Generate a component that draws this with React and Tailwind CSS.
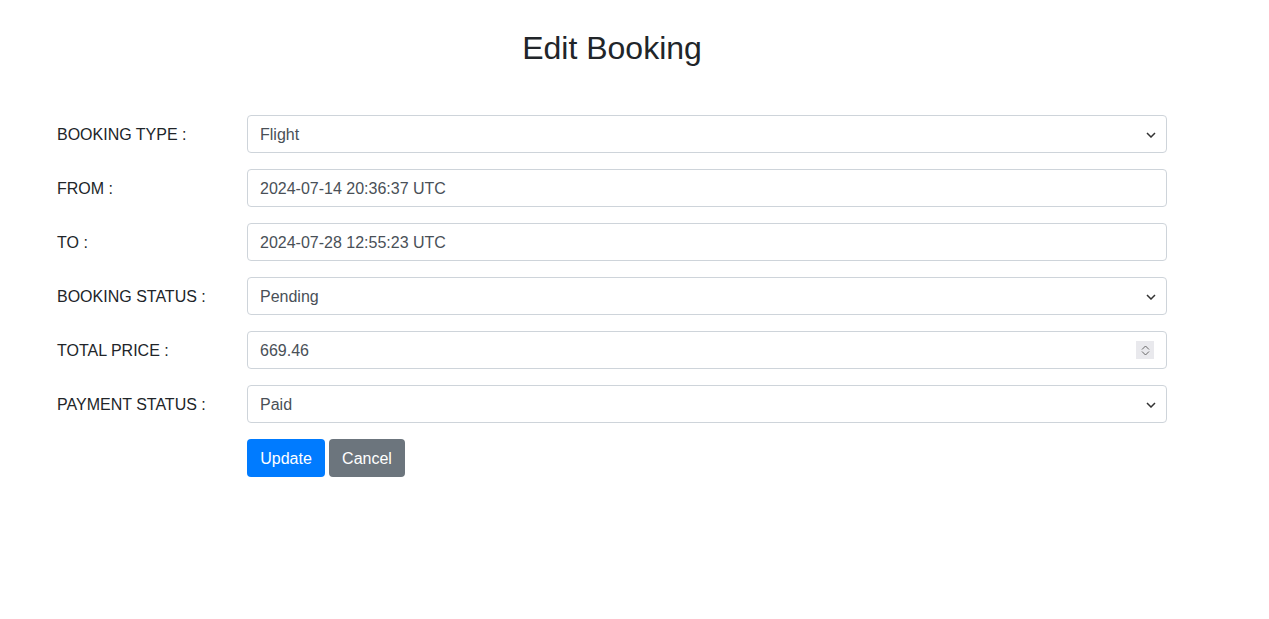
import React from "react";

const font = { fontFamily: '"Liberation Sans", Arial, sans-serif' };

function Chevron() {
  return (
    <svg width="10" height="6" viewBox="0 0 10 6" className="absolute right-[10px] top-[16px]">
      <path d="M1 1 L5 5 L9 1" fill="none" stroke="#333" strokeWidth="1.5" />
    </svg>
  );
}

function Field({ value, kind }) {
  return (
    <div className="relative h-[38px] w-[920px] rounded-[4px] border border-[#ced4da] bg-white pl-[12px] pt-[2px] flex items-center text-[16px] text-[#495057]">
      <span>{value}</span>
      {kind === "select" && <Chevron />}
      {kind === "number" && (
        <div className="absolute right-[12px] top-[9px] w-[18px] h-[18px] bg-[#e9e9ed] flex flex-col items-center justify-center gap-[1px]">
          <svg width="9" height="5" viewBox="0 0 9 5"><path d="M1 4.5 L4.5 1 L8 4.5" fill="none" stroke="#666" strokeWidth="1" /></svg>
          <svg width="9" height="5" viewBox="0 0 9 5"><path d="M1 0.5 L4.5 4 L8 0.5" fill="none" stroke="#666" strokeWidth="1" /></svg>
        </div>
      )}
    </div>
  );
}

const rows = [
  ["BOOKING TYPE :", "Flight", "select"],
  ["FROM :", "2024-07-14 20:36:37 UTC", "text"],
  ["TO :", "2024-07-28 12:55:23 UTC", "text"],
  ["BOOKING STATUS :", "Pending", "select"],
  ["TOTAL PRICE :", "669.46", "number"],
  ["PAYMENT STATUS :", "Paid", "select"],
];

export default function App() {
  return (
    <div className="min-h-[619px] bg-white text-[#212529]" style={font}>
      <div className="ml-[57px] w-[1110px] pt-[29px]">
        <h2 className="text-center text-[32px] leading-[38px] font-normal mb-[48px]">Edit Booking</h2>
        <div className="flex flex-col gap-[16px]">
          {rows.map(([label, value, kind]) => (
            <div key={label} className="flex items-center">
              <div className="w-[190px] text-[16px] leading-[24px] pt-[2px]">{label}</div>
              <Field value={value} kind={kind} />
            </div>
          ))}
          <div className="flex pl-[190px] gap-[4px]">
            <button className="h-[38px] w-[78px] rounded-[4px] bg-[#007bff] text-white text-[16px] pt-[2px]">Update</button>
            <button className="h-[38px] w-[76px] rounded-[4px] bg-[#6c757d] text-white text-[16px] pt-[2px]">Cancel</button>
          </div>
        </div>
      </div>
    </div>
  );
}
